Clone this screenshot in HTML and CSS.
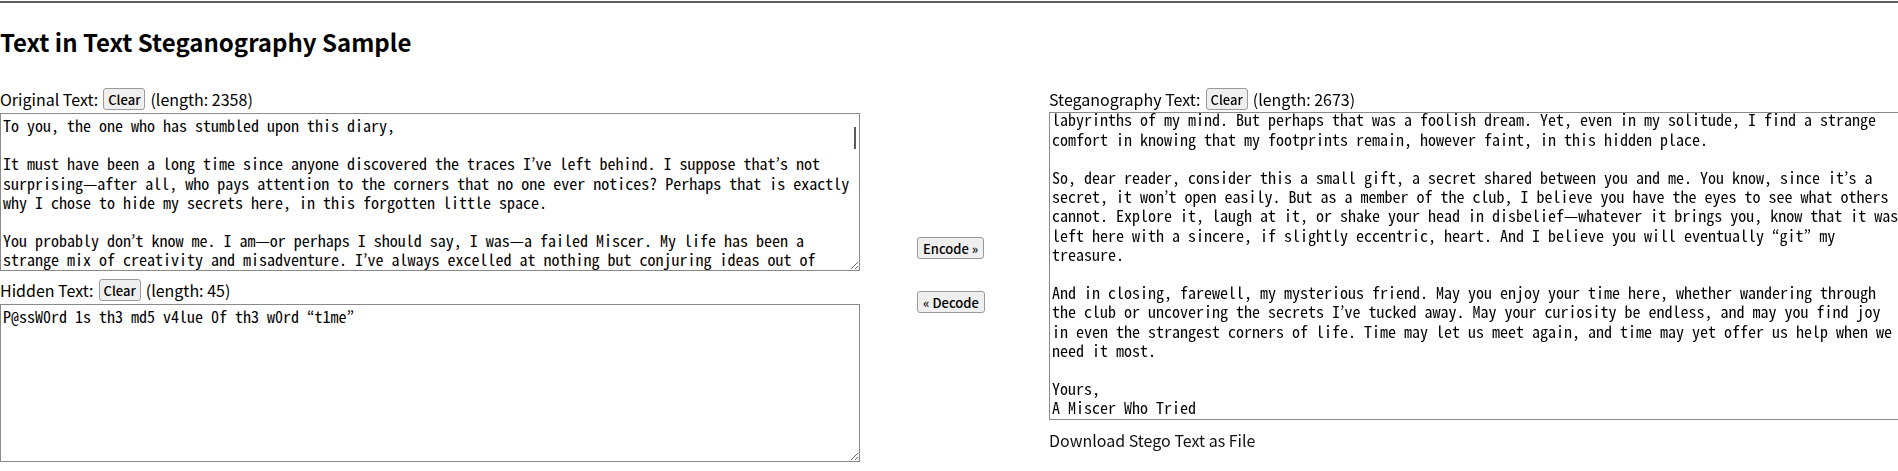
FILE: index.html
```html
<!DOCTYPE html>
<html>
<head>
    <title>Text in Text Steganography Sample</title>
    <link rel="stylesheet" href="styles.css">
</head>
<body>
    <header class="page-head">
        <h1 class="page-title">Text in Text Steganography Sample</h1>
    </header>

    <main class="workspace">
        <section class="pane">
            <div class="field-label">
                <span>Original Text:</span>
                <button class="btn-clear" onclick="clearBox('originalText')">Clear</button>
                <span>(length: <span id="originalLength">2358</span>)</span>
            </div>
            <div class="text-wrap">
                <textarea id="originalText" class="text-box text-box-short" oninput="updateLength('originalText')">To you, the one who has stumbled upon this diary,

It must have been a long time since anyone discovered the traces I’ve left behind. I suppose that’s not surprising—after all, who pays attention to the corners that no one ever notices? Perhaps that is exactly why I chose to hide my secrets here, in this forgotten little space.

You probably don’t know me. I am—or perhaps I should say, I was—a failed Miscer. My life has been a strange mix of creativity and misadventure. I’ve always excelled at nothing but conjuring ideas out of thin air, yet I never managed to turn a single one of them into something that lasted. I wrote, I built, I tinkered, and more often than not, I failed. Still, I kept going, because making something always felt more honest than giving up.

I used to hope that someone, someday, would understand what I was trying to say, and walk with me in the labyrinths of my mind. But perhaps that was a foolish dream. Yet, even in my solitude, I find a strange comfort in knowing that my footprints remain, however faint, in this hidden place.

So, dear reader, consider this a small gift, a secret shared between you and me. You know, since it’s a secret, it won’t open easily. But as a member of the club, I believe you have the eyes to see what others cannot. Explore it, laugh at it, or shake your head in disbelief—whatever it brings you, know that it was left here with a sincere, if slightly eccentric, heart. And I believe you will eventually “git” my treasure.

And in closing, farewell, my mysterious friend. May you enjoy your time here, whether wandering through the club or uncovering the secrets I’ve tucked away. May your curiosity be endless, and may you find joy in even the strangest corners of life. Time may let us meet again, and time may yet offer us help when we need it most.

Yours,
A Miscer Who Tried</textarea>
                <span class="scroll-thumb"></span>
            </div>

            <div class="field-label field-label-gap">
                <span>Hidden Text:</span>
                <button class="btn-clear" onclick="clearBox('hiddenText')">Clear</button>
                <span>(length: <span id="hiddenLength">45</span>)</span>
            </div>
            <textarea id="hiddenText" class="text-box text-box-short" oninput="updateLength('hiddenText')">P@ssW0rd 1s th3 md5 v4lue 0f th3 w0rd “t1me”</textarea>
        </section>

        <div class="actions">
            <button class="btn-action" onclick="encodeText()">Encode »</button>
            <button class="btn-action" onclick="decodeText()">« Decode</button>
        </div>

        <section class="pane">
            <div class="field-label">
                <span>Steganography Text:</span>
                <button class="btn-clear" onclick="clearBox('stegoText')">Clear</button>
                <span>(length: <span id="stegoLength">2673</span>)</span>
            </div>
            <textarea id="stegoText" class="text-box text-box-tall" oninput="updateLength('stegoText')">To you, the one who has stumbled upon this diary,

It must have been a long time since anyone discovered the traces I’ve left behind. I suppose that’s not surprising—after all, who pays attention to the corners that no one ever notices? Perhaps that is exactly why I chose to hide my secrets here, in this forgotten little space.

You probably don’t know me. I am—or perhaps I should say, I was—a failed Miscer. My life has been a strange mix of creativity and misadventure. I’ve always excelled at nothing but conjuring ideas out of thin air, yet I never managed to turn a single one of them into something that lasted. I wrote, I built, I tinkered, and more often than not, I failed. Still, I kept going, because making something always felt more honest than giving up.

I used to hope that someone, someday, would understand what I was trying to say, and walk with me in the labyrinths of my mind. But perhaps that was a foolish dream. Yet, even in my solitude, I find a strange comfort in knowing that my footprints remain, however faint, in this hidden place.

So, dear reader, consider this a small gift, a secret shared between you and me. You know, since it’s a secret, it won’t open easily. But as a member of the club, I believe you have the eyes to see what others cannot. Explore it, laugh at it, or shake your head in disbelief—whatever it brings you, know that it was left here with a sincere, if slightly eccentric, heart. And I believe you will eventually “git” my treasure.

And in closing, farewell, my mysterious friend. May you enjoy your time here, whether wandering through the club or uncovering the secrets I’ve tucked away. May your curiosity be endless, and may you find joy in even the strangest corners of life. Time may let us meet again, and time may yet offer us help when we need it most.

Yours,
A Miscer Who Tried</textarea>
            <a class="download-link" href="#" onclick="downloadStego(); return false;">Download Stego Text as File</a>
        </section>
    </main>

    <script>
        const ZERO = '\u200b';
        const ONE = '\u200c';

        function updateLength(id) {
            const box = document.getElementById(id);
            const map = { originalText: 'originalLength', hiddenText: 'hiddenLength', stegoText: 'stegoLength' };
            document.getElementById(map[id]).innerText = box.value.length;
        }

        function clearBox(id) {
            document.getElementById(id).value = '';
            updateLength(id);
        }

        function encodeText() {
            const cover = document.getElementById('originalText').value;
            const secret = document.getElementById('hiddenText').value;
            let bits = '';
            for (const ch of secret) {
                bits += ch.codePointAt(0).toString(2).padStart(16, '0');
            }
            const hidden = bits.replace(/0/g, ZERO).replace(/1/g, ONE);
            const cut = cover.indexOf('\n');
            const stego = cut < 0 ? cover + hidden : cover.slice(0, cut) + hidden + cover.slice(cut);
            document.getElementById('stegoText').value = stego;
            updateLength('stegoText');
        }

        function decodeText() {
            const stego = document.getElementById('stegoText').value;
            const bits = stego.split('').filter(c => c === ZERO || c === ONE)
                .map(c => c === ZERO ? '0' : '1').join('');
            let secret = '';
            for (let i = 0; i + 16 <= bits.length; i += 16) {
                secret += String.fromCodePoint(parseInt(bits.slice(i, i + 16), 2));
            }
            document.getElementById('hiddenText').value = secret;
            document.getElementById('originalText').value = stego.replace(/[\u200b\u200c]/g, '');
            updateLength('hiddenText');
            updateLength('originalText');
        }

        function downloadStego() {
            const blob = new Blob([document.getElementById('stegoText').value], { type: 'text/plain' });
            const link = document.createElement('a');
            link.href = URL.createObjectURL(blob);
            link.download = 'stego.txt';
            link.click();
        }

        // show the end of the stego text, like after an encode
        const stegoBox = document.getElementById('stegoText');
        stegoBox.scrollTop = stegoBox.scrollHeight;
    </script>
</body>
</html>
```

FILE: styles.css
```css
html, body {
    overflow-x: hidden;
}

body {
    margin: 0;
    padding-top: 1px;
    font-family: "Noto Sans CJK JP", "Noto Sans", sans-serif;
    font-size: 16px;
    color: #000;
    background: #fff;
}

.page-head {
    border-top: 2px solid #5e5e5e;
}

.page-title {
    margin: 0;
    padding: 22px 0 0;
    font-size: 24px;
    font-weight: bold;
    line-height: 34px;
}

.workspace {
    display: flex;
    align-items: flex-start;
    margin-top: 29px;
    width: 1909px;
}

.pane {
    flex: none;
    width: 860px;
}

.field-label {
    display: flex;
    align-items: center;
    gap: 5px;
    height: 22px;
    line-height: 22px;
}

.field-label-gap {
    margin-top: 8px;
}

.btn-clear,
.btn-action {
    font-family: "Noto Sans CJK JP", "Noto Sans", sans-serif;
    font-size: 13px;
    font-weight: 500;
    color: #000;
    background: #efefef;
    border: 1px solid #9a9a9a;
    border-radius: 3px;
    height: 22px;
    padding: 0 5px;
    cursor: pointer;
}

.btn-clear {
    padding: 0 4px;
}

.text-wrap {
    position: relative;
}

/* thin overlay scrollbar like the one in the source box */
.scroll-thumb {
    position: absolute;
    right: 4px;
    top: 14px;
    width: 2px;
    height: 22px;
    background: #5a5a5a;
}

.text-box {
    display: block;
    box-sizing: border-box;
    width: 860px;
    margin: 3px 0 0;
    padding: 2px 6px 2px 2px;
    border: 1px solid #8a8a8a;
    font-family: "Noto Sans Mono CJK JP", "Noto Sans CJK JP", monospace;
    font-size: 16px;
    line-height: 1.2;
    color: #000;
    background: #fff;
}

.text-box-short {
    height: 158px;
}

.text-box-tall {
    height: 308px;
    margin-top: 2px;
}

.actions {
    flex: none;
    align-self: stretch;
    box-sizing: border-box;
    width: 189px;
    padding-left: 57px;
    display: flex;
    flex-direction: column;
    justify-content: center;
    align-items: flex-start;
    gap: 32px;
}

.download-link {
    display: block;
    margin-top: 10px;
    color: #111;
    text-decoration: none;
    line-height: 20px;
}
```
